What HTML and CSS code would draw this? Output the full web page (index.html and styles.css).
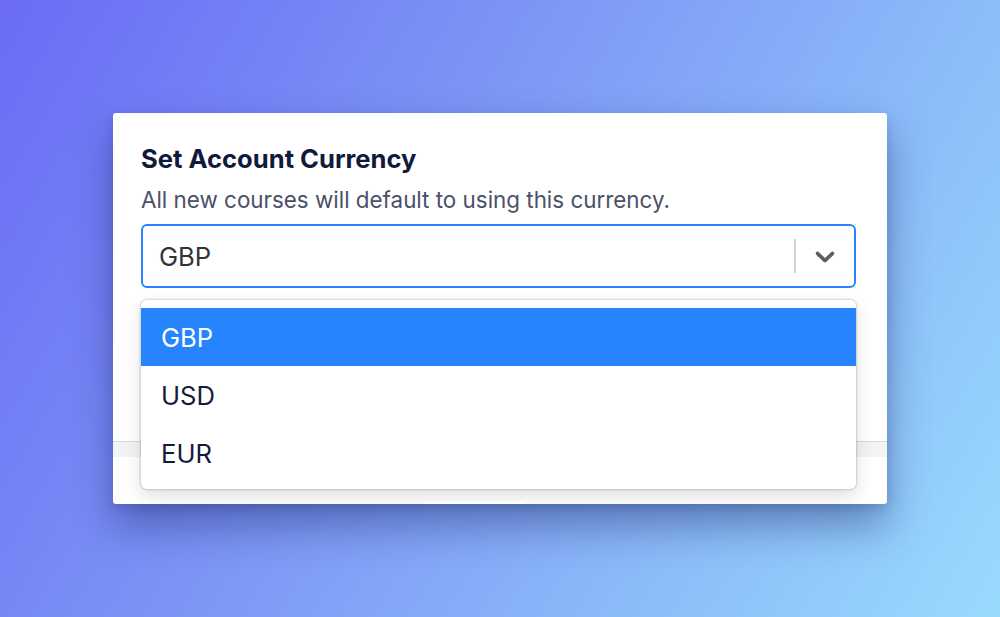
FILE: index.html
```html
<!DOCTYPE html>
<html lang="en">
<head>
<meta charset="utf-8">
<title>Set Account Currency</title>
<link rel="stylesheet" href="styles.css">
</head>
<body>
<div class="stage">
  <div class="modal">
    <div class="modal-body">
      <h2 class="title">Set Account Currency</h2>
      <p class="subtitle">All new courses will default to using this currency.</p>
      <div class="select">
        <div class="control">
          <div class="value">GBP</div>
          <div class="indicators">
            <span class="separator"></span>
            <span class="indicator">
              <svg viewBox="0 0 20 20" width="32" height="32" aria-hidden="true"><path d="M4.516 7.548c0.436-0.446 1.043-0.481 1.576 0l3.908 3.747 3.908-3.747c0.533-0.481 1.141-0.446 1.574 0 0.436 0.445 0.408 1.197 0 1.615-0.406 0.418-4.695 4.502-4.695 4.502-0.217 0.223-0.502 0.335-0.787 0.335s-0.57-0.112-0.789-0.335c0 0-4.287-4.084-4.695-4.502s-0.436-1.17 0-1.615z"/></svg>
            </span>
          </div>
        </div>
        <div class="menu">
          <div class="option selected">GBP</div>
          <div class="option">USD</div>
          <div class="option">EUR</div>
        </div>
      </div>
    </div>
    <div class="modal-divider"></div>
    <div class="modal-footer">
      <span class="footer-btn"></span>
    </div>
  </div>
</div>
</body>
</html>
```

FILE: styles.css
```css
* { box-sizing: border-box; }

html, body {
  margin: 0;
  padding: 0;
}

body {
  width: 1000px;
  height: 617px;
  overflow: hidden;
  font-family: Inter, "Liberation Sans", Arial, sans-serif;
  background: linear-gradient(120deg, #6b6bf5 0%, #7f9cf6 45%, #99dbfd 100%);
}

.stage {
  width: 1000px;
  height: 617px;
  display: flex;
  align-items: center;
  justify-content: center;
}

.modal {
  width: 774px;
  height: 391px;
  background: #ffffff;
  border-radius: 3px;
  box-shadow: 0 22px 42px rgba(25, 35, 100, 0.42), 0 4px 10px rgba(25, 35, 100, 0.15);
  display: flex;
  flex-direction: column;
  position: relative;
}

.modal-body {
  flex: 1;
  padding: 30px 31px 0 28px;
}

.title {
  margin: 0;
  font-size: 25.6px;
  line-height: 32px;
  font-weight: 700;
  color: #111a3b;
}

.subtitle {
  margin: 10px 0 0;
  font-size: 22.4px;
  line-height: 30px;
  color: #4a5169;
}

.select {
  margin-top: 9px;
  position: relative;
}

.control {
  height: 64px;
  border: 2px solid #2684ff;
  border-radius: 6px;
  display: flex;
  align-items: center;
  background: #fff;
}

.value {
  flex: 1;
  padding-left: 16px;
  font-size: 25.6px;
  color: #333333;
}

.indicators {
  display: flex;
  align-items: center;
  align-self: stretch;
}

.separator {
  width: 2px;
  align-self: stretch;
  margin: 13px 0;
  background: #d2d2d2;
}

.indicator {
  display: flex;
  padding: 0 13px;
}

.indicator svg {
  fill: #5f5f5f;
  display: block;
}

.menu {
  position: absolute;
  top: 76px;
  left: 0;
  right: 0;
  background: #fff;
  border-radius: 6px;
  padding: 8px 0 7px;
  box-shadow: 0 0 0 1.5px rgba(0, 0, 0, 0.1), 0 7px 18px rgba(0, 0, 0, 0.13);
  z-index: 2;
}

.option {
  height: 58px;
  display: flex;
  align-items: center;
  padding: 0 20px;
  font-size: 25.6px;
  color: #141a3e;
}

.option.selected {
  background: #2684ff;
  color: #ffffff;
}

.modal-divider {
  height: 16px;
  border-top: 1px solid #d9dadd;
  background: #f2f3f5;
}

.modal-footer {
  height: 47px;
  position: relative;
}

.footer-btn {
  position: absolute;
  left: 309px;
  bottom: 0;
  width: 101px;
  height: 2px;
  background: #ffffff;
  border-radius: 2px 2px 0 0;
  z-index: 3;
}
```
